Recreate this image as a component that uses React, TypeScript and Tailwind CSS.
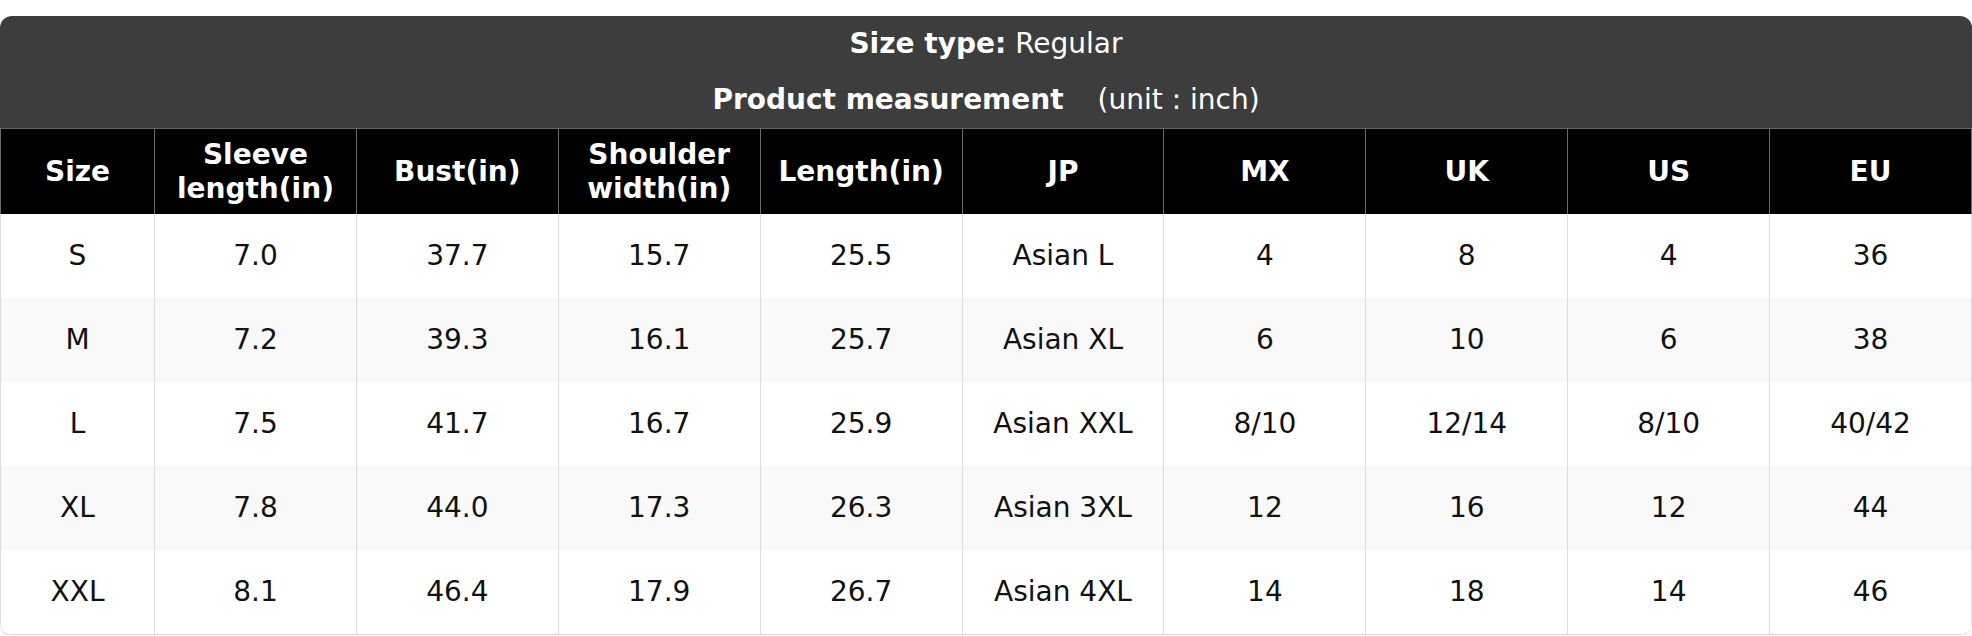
import React from "react";

type Row = string[];

const headers = [
  "Size",
  "Sleeve length(in)",
  "Bust(in)",
  "Shoulder width(in)",
  "Length(in)",
  "JP",
  "MX",
  "UK",
  "US",
  "EU",
];

const rows: Row[] = [
  ["S", "7.0", "37.7", "15.7", "25.5", "Asian L", "4", "8", "4", "36"],
  ["M", "7.2", "39.3", "16.1", "25.7", "Asian XL", "6", "10", "6", "38"],
  ["L", "7.5", "41.7", "16.7", "25.9", "Asian XXL", "8/10", "12/14", "8/10", "40/42"],
  ["XL", "7.8", "44.0", "17.3", "26.3", "Asian 3XL", "12", "16", "12", "44"],
  ["XXL", "8.1", "46.4", "17.9", "26.7", "Asian 4XL", "14", "18", "14", "46"],
];

export default function App() {
  return (
    <div className="w-full bg-white pt-4 font-['DejaVu_Sans',sans-serif]">
      <div className="rounded-[12px] overflow-hidden shadow-[0_1px_2px_rgba(0,0,0,0.12)]">
        {/* Titre */}
        <div className="bg-[#3d3d3d] text-white text-[28px] leading-[1.18]">
          <div className="h-[56px] flex items-center justify-center">
            <span className="font-bold">Size type:</span>
            <span className="ml-[9px]">Regular</span>
          </div>
          <div className="h-[56px] flex items-center justify-center">
            <span className="font-bold">Product measurement</span>
            <span className="ml-[34px]">(unit : inch)</span>
          </div>
        </div>

        {/* En-tête du tableau */}
        <div className="grid grid-cols-[155px_repeat(9,1fr)] border-t border-[#666666] bg-black">
          {headers.map((h, i) => (
            <div
              key={h}
              className={`h-[85px] flex items-center justify-center text-center px-4 text-white font-bold text-[28px] leading-[1.18] border-r border-[#6b6b6b] ${
                i === 0 ? "border-l" : ""
              }`}
            >
              {h}
            </div>
          ))}
        </div>

        {/* Lignes */}
        <div className="border-b border-[#d9d9d9] rounded-b-[12px] overflow-hidden">
          {rows.map((row, r) => (
            <div
              key={row[0]}
              className={`grid grid-cols-[155px_repeat(9,1fr)] ${
                r % 2 === 1 ? "bg-[#f9f9f9]" : "bg-white"
              }`}
            >
              {row.map((cell, i) => (
                <div
                  key={i}
                  className={`h-[84px] flex items-center justify-center text-[28px] text-[#111111] border-r border-[#dcdcdc] ${
                    i === 0 ? "border-l" : ""
                  }`}
                >
                  {cell}
                </div>
              ))}
            </div>
          ))}
        </div>
      </div>
    </div>
  );
}
